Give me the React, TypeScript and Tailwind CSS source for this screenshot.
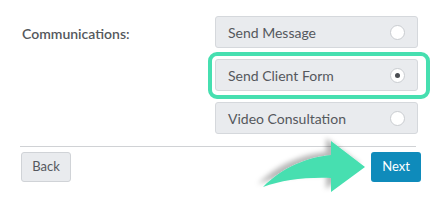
import * as React from "react";

const options = [
  { label: "Send Message", selected: false },
  { label: "Send Client Form", selected: true },
  { label: "Video Consultation", selected: false },
];

function Radio({ selected }: { selected: boolean }) {
  return (
    <span className="flex h-[15px] w-[15px] items-center justify-center rounded-full border border-[#c9ccd0] bg-white">
      {selected && <span className="h-[5px] w-[5px] rounded-full bg-[#4a4d52]" />}
    </span>
  );
}

function Arrow() {
  return (
    <svg
      className="pointer-events-none absolute left-[250px] top-[135px]"
      width="130"
      height="65"
      viewBox="0 0 130 65"
    >
      <defs>
        <filter id="arrow-shadow" x="-30%" y="-30%" width="160%" height="160%">
          <feDropShadow dx="-5" dy="-3" stdDeviation="2.5" floodColor="#000" floodOpacity="0.28" />
        </filter>
      </defs>
      <path
        d="M13,52 C33,32 58,22 81,20 L81,6 L115,32 L81,57 L81,43 C56,42 32,45 13,52 Z"
        fill="#46dfb0"
        filter="url(#arrow-shadow)"
      />
    </svg>
  );
}

export default function App() {
  return (
    <div className="relative h-[202px] w-[436px] overflow-hidden bg-white font-['Lato','Noto_Sans',sans-serif] text-[#55585d]">
      <div className="flex pl-[22px] pt-[16px]">
        <div className="w-[193px] pt-[7px] text-[14px] font-semibold">Communications:</div>
        <div className="flex w-[203px] flex-col gap-[11px]">
          {options.map((o) => (
            <div key={o.label} className="relative">
              {o.selected && (
                <div className="absolute -left-[7px] -right-[12px] -top-[7px] -bottom-[8px] rounded-[9px] border-[4px] border-[#46dfb0]" />
              )}
              <div className="relative flex h-[32px] items-center justify-between rounded-[3px] border border-[#d5d8dc] bg-[#e9ebee] pl-[12px] pr-[12px] text-[14px]">
                <span>{o.label}</span>
                <Radio selected={o.selected} />
              </div>
            </div>
          ))}
        </div>
      </div>

      <div className="mx-[20px] mt-[12px] border-t border-[#d0d2d5]" />

      <div className="flex items-center justify-between pl-[21px] pr-[15px] pt-[5px]">
        <button
          type="button"
          className="h-[30px] w-[50px] rounded-[3px] border border-[#d0d3d7] bg-[#e9ebee] text-[13px] text-[#55585d]"
        >
          Back
        </button>
        <button
          type="button"
          className="h-[30px] w-[50px] rounded-[3px] bg-[#0f8bbb] text-[13px] text-white"
        >
          Next
        </button>
      </div>

      <Arrow />
    </div>
  );
}
